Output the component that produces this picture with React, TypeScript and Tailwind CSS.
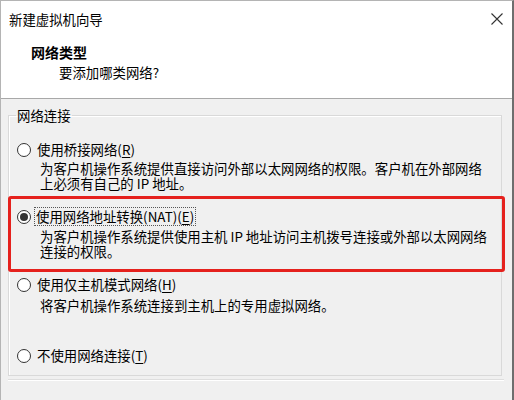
export default function App() {
  const font = { fontFamily: '"Noto Sans CJK SC", "Noto Sans", sans-serif' }

  return (
    <div
      className="w-[514px] h-[400px] bg-[#f0f0f0] border-t border-l border-[#b4b4b4] border-r-2 border-r-[#6e6e6e] overflow-hidden text-black text-[13.4px] leading-[15px]"
      style={font}
    >
      {/* Header */}
      <div className="h-[98px] bg-white border-b border-[#a8a8a8] relative">
        <div className="flex items-center justify-between pl-[8px] pr-[8px] pt-[10px]">
          <span className="leading-[16px]">新建虚拟机向导</span>
          <svg width="12" height="12" viewBox="0 0 12 12" className="mr-[1px]">
            <path d="M0.5 0.5 L11.5 11.5 M11.5 0.5 L0.5 11.5" stroke="#333" strokeWidth="1.1" fill="none" />
          </svg>
        </div>
        <div className="pl-[30px] pt-[17px] font-bold text-[14px] leading-[16px]">网络类型</div>
        <div className="pl-[58px] pt-[4px] leading-[16px]">要添加哪类网络?</div>
      </div>

      {/* Body */}
      <fieldset className="ml-[7px] mr-[10px] mt-[9px] h-[268px] border border-[#d9d9d9] shadow-[inset_1px_1px_0_#ffffff] px-0 pt-[19px] pb-[14px]">
        <legend className="ml-[7px] px-[1px] leading-[15px]">网络连接</legend>

        <div className="flex flex-col">
          {/* Bridged */}
          <div className="pl-[8px]">
            <Radio label="使用桥接网络(" mnemonic="R" />
            <div className="ml-[23px] mt-[4px]">
              <div>为客户机操作系统提供直接访问外部以太网网络的权限。客户机在外部网络</div>
              <div>上必须有自己的 IP 地址。</div>
            </div>
          </div>

          {/* NAT - highlighted */}
          <div className="mt-[5px] -ml-[1px] -mr-[4px] border-[3px] border-[#e5211d] rounded-[3px] pl-[6px] pt-[10px] pb-[10px]">
            <Radio label="使用网络地址转换(NAT)(" mnemonic="E" checked focused />
            <div className="ml-[23px] mt-[5px]">
              <div>为客户机操作系统提供使用主机 IP 地址访问主机拨号连接或外部以太网网络</div>
              <div>连接的权限。</div>
            </div>
          </div>

          {/* Host only */}
          <div className="pl-[8px] mt-[5px]">
            <Radio label="使用仅主机模式网络(" mnemonic="H" />
            <div className="ml-[23px] mt-[6px]">
              <div>将客户机操作系统连接到主机上的专用虚拟网络。</div>
            </div>
          </div>

          {/* None */}
          <div className="pl-[8px] mt-[35px]">
            <Radio label="不使用网络连接(" mnemonic="T" />
          </div>
        </div>
      </fieldset>

      <div className="ml-[7px] mr-[8px] mt-[3px] border-t border-[#dedede] border-b border-b-white" />
    </div>
  )
}

function Radio({
  label,
  mnemonic,
  checked,
  focused,
}: {
  label: string
  mnemonic: string
  checked?: boolean
  focused?: boolean
}) {
  return (
    <div className="flex items-center h-[15px]">
      <span
        className={
          checked
            ? 'w-[14px] h-[14px] rounded-full border border-[#333333] bg-white flex items-center justify-center shrink-0'
            : 'w-[14px] h-[14px] rounded-full border border-[#333333] bg-white shrink-0'
        }
      >
        {checked && <span className="w-[8px] h-[8px] rounded-full bg-[#333333]" />}
      </span>
      <span
        className={
          focused
            ? 'ml-[3px] px-[1px] py-[1px] border border-dotted border-[#555555]'
            : 'ml-[4px] px-[1px] border border-transparent'
        }
      >
        {label}
        <span className="underline underline-offset-2">{mnemonic}</span>)
      </span>
    </div>
  )
}
